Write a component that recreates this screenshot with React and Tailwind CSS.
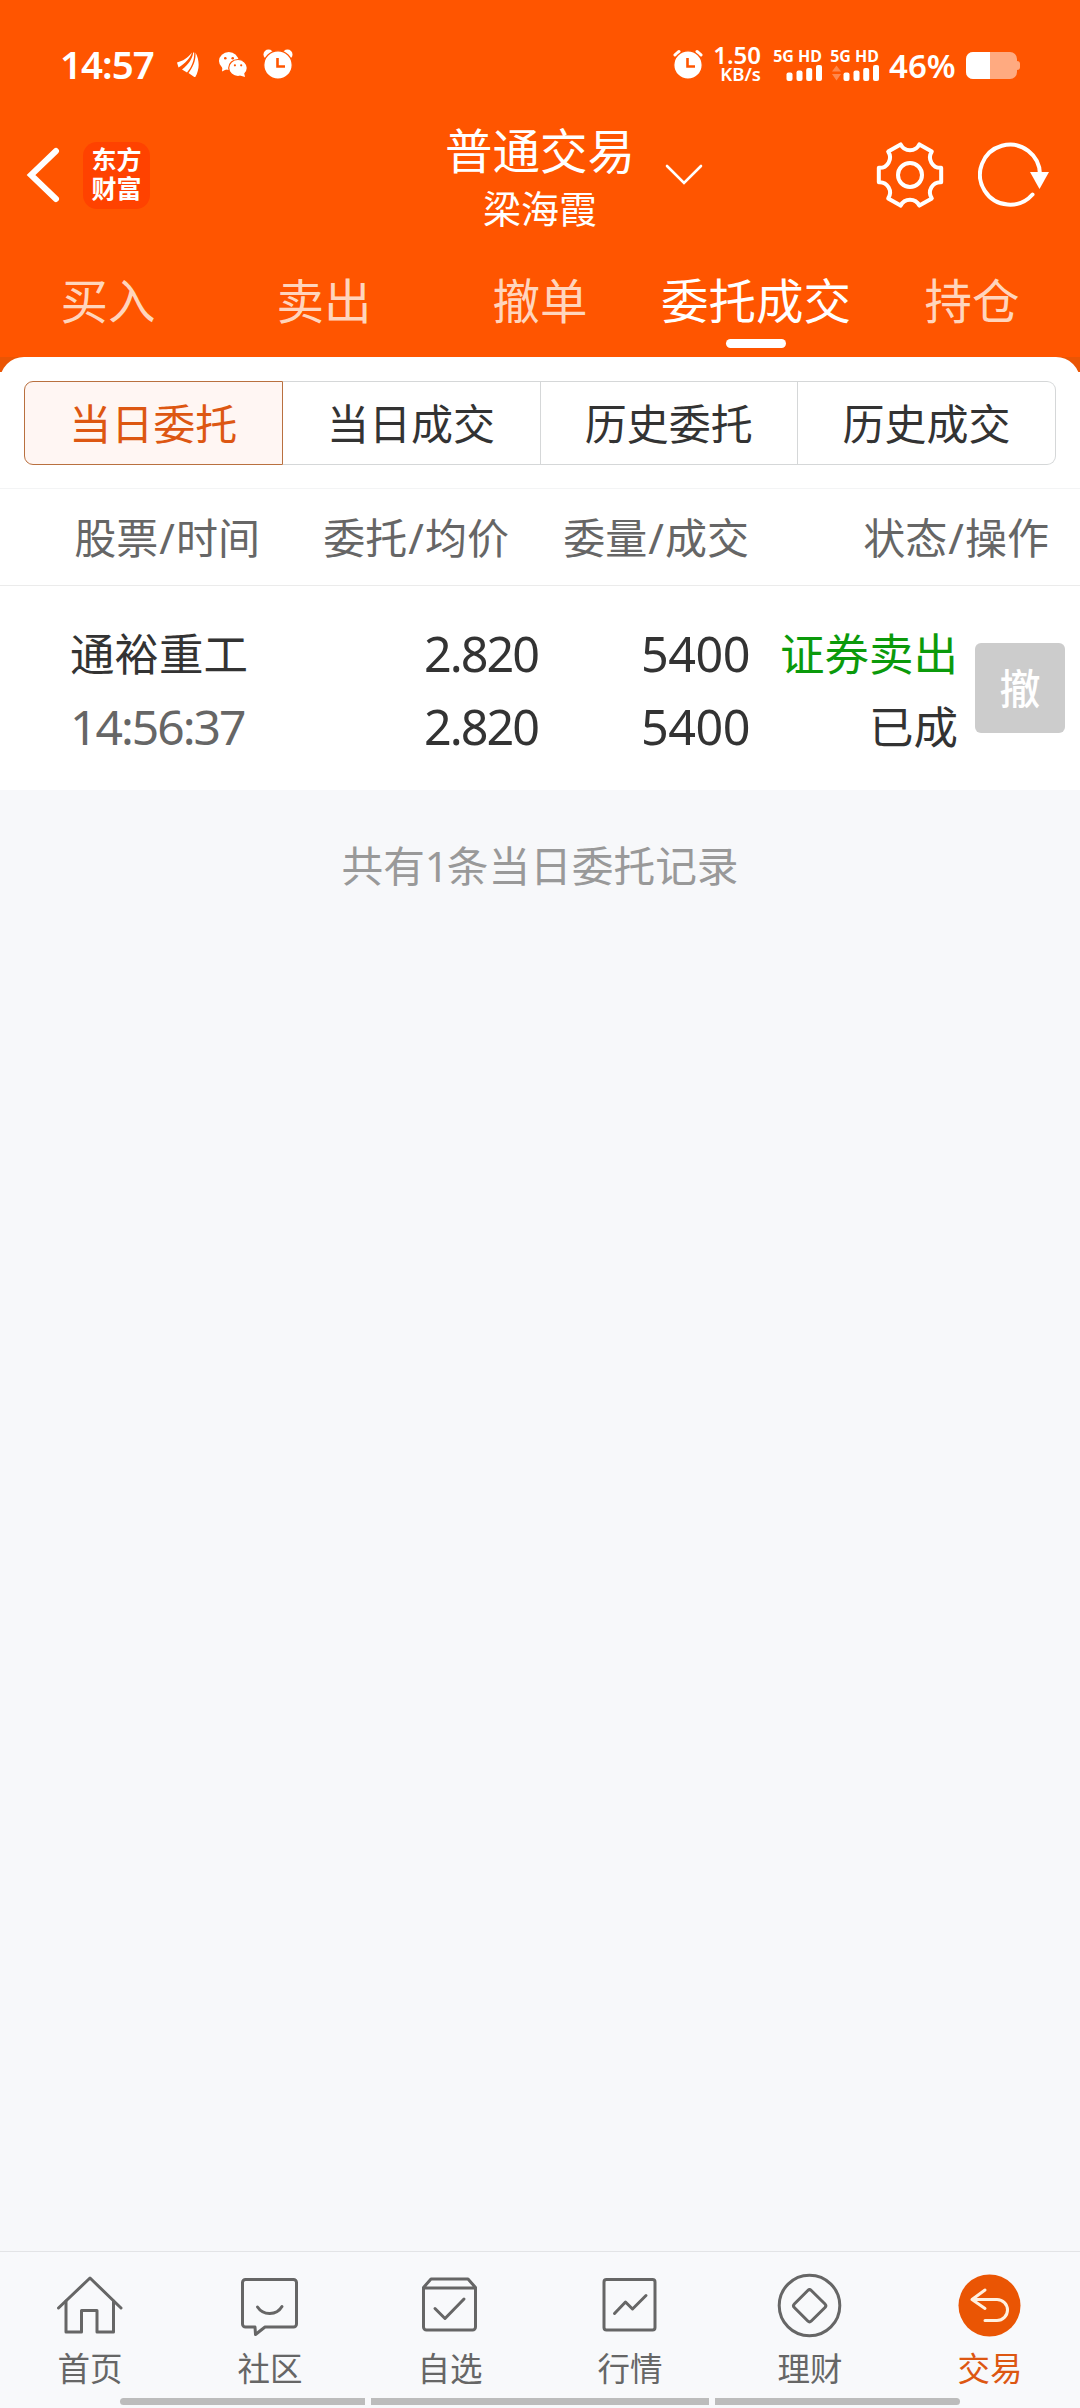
import { useState } from "react";

const TABS = ["买入", "卖出", "撤单", "委托成交", "持仓"];
const FILTERS = ["当日委托", "当日成交", "历史委托", "历史成交"];
const NAV = [
  { label: "首页", Icon: HomeIcon },
  { label: "社区", Icon: ChatIcon },
  { label: "自选", Icon: WatchIcon },
  { label: "行情", Icon: MarketIcon },
  { label: "理财", Icon: WealthIcon },
  { label: "交易", Icon: TradeIcon },
];

const ORDERS = [
  {
    id: 1,
    name: "通裕重工",
    time: "14:56:37",
    price: "2.820",
    avg: "2.820",
    qty: "5400",
    filled: "5400",
    side: "证券卖出",
    status: "已成",
  },
];

// Six-tooth outline: flat teeth joined by concave arcs
function gearPath(c, r) {
  const pt = (deg) => {
    const a = (deg * Math.PI) / 180;
    return `${(c + r * Math.cos(a)).toFixed(2)} ${(c + r * Math.sin(a)).toFixed(2)}`;
  };
  let d = `M${pt(-13)}`;
  for (let i = 0; i < 6; i++) {
    d += `L${pt(i * 60 + 13)}A10.4 10.4 0 0 0 ${pt(i * 60 + 47)}`;
  }
  return d + "Z";
}

function AlarmIcon({ className = "", filledBells = false }) {
  return (
    <svg viewBox="0 0 30 30" className={`h-[30px] w-[30px] ${className}`} fill="none">
      {filledBells ? (
        <g fill="#fff">
          <circle cx="5.500" cy="5.500" r="5" />
          <circle cx="24.500" cy="5.500" r="5" />
        </g>
      ) : (
        <path d="M2 6 6 2.500M28 6 24 2.500" stroke="#fff" strokeWidth="3" strokeLinecap="round" />
      )}
      <circle cx="15" cy="16" r="14.200" fill="#fff" stroke="#ff5500" strokeWidth="1.200" />
      <path d="M14.500 9v8.500h7.500" stroke="#ff5500" strokeWidth="2.600" />
    </svg>
  );
}

function BrandIcon() {
  return (
    <svg viewBox="0 0 22 25" className="h-[25px] w-[22px]" fill="#fff">
      <path d="M0 10.500C6 9 10.500 6 15 0.500 13.500 6 8 11.500 1.500 15.500Z" />
      <path d="M16.200 0.500C15.500 7 11 13 5 17.500L10 20.500C15 14.500 17.500 8 17.200 0.500Z" />
      <path d="M18.500 0.500C19 8.500 16 15 11.500 21L18 25.500C22.500 18 23 9 18.500 0.500Z" />
    </svg>
  );
}

function WechatIcon() {
  return (
    <svg viewBox="0 0 28 25" className="h-[25px] w-[28px]">
      <ellipse cx="9.800" cy="9" rx="9.800" ry="9" fill="#fff" />
      <path d="M3.500 14 3 19.500 9 16.500Z" fill="#fff" />
      <ellipse cx="19" cy="16" rx="9.300" ry="8.500" fill="#fff" stroke="#ff5500" strokeWidth="1.200" />
      <path d="M21 23.500 26 25 25 20.500Z" fill="#fff" />
      <g fill="#ff5500">
        <circle cx="6.300" cy="6.300" r="1.300" />
        <circle cx="13.700" cy="6.300" r="1.300" />
        <circle cx="15.900" cy="13.300" r="1.100" />
        <circle cx="22.200" cy="13.300" r="1.100" />
      </g>
    </svg>
  );
}

function Signal({ data = false }) {
  return (
    <div className="flex w-12 flex-col items-end">
      <span className="whitespace-nowrap text-[16px] leading-[17px] font-bold">5G HD</span>
      <svg viewBox="0 0 48 16" className="h-4 w-12" fill="#fff">
        {data && (
          <g opacity="0.3">
            <path d="M1 6.500 5.500 0.500 10 6.500Z" />
            <path d="M1 9 5.500 15.500 10 9Z" />
          </g>
        )}
        <rect x="12.500" y="7.500" width="6" height="8.500" rx="2" />
        <rect x="22.500" y="5.500" width="6" height="10.500" rx="2" />
        <rect x="32.200" y="3" width="6" height="13" rx="2" />
        <rect x="42" y="0" width="6" height="16" rx="2" />
      </svg>
    </div>
  );
}

function NavSvg({ children }) {
  return (
    <svg
      viewBox="0 0 72 72"
      className="h-[72px] w-[72px]"
      fill="none"
      stroke="#666"
      strokeWidth="3"
      strokeLinecap="round"
      strokeLinejoin="round"
    >
      {children}
    </svg>
  );
}

function HomeIcon() {
  return (
    <NavSvg>
      <path d="M4.500 38 36 8 67 38" />
      <path d="M12 31V62H27.500V40.500H43V62H59.500V31" />
    </NavSvg>
  );
}

function ChatIcon() {
  return (
    <NavSvg>
      <path d="M11.500 9.500H59.500a3 3 0 0 1 3 3V54a3 3 0 0 1-3 3H31L21.500 64.500 21 57H11.500a3 3 0 0 1-3-3V12.500a3 3 0 0 1 3-3Z" />
      <path d="M23.500 37A14.500 14.500 0 0 0 48 36.500" />
    </NavSvg>
  );
}

function WatchIcon() {
  return (
    <NavSvg>
      <path d="M9.500 17.500 17 9H54L61.500 17.500V57a3 3 0 0 1-3 3H12.500a3 3 0 0 1-3-3ZM9.500 18H61.500" />
      <path d="M21 38.500 31 48.500 50 29" />
    </NavSvg>
  );
}

function MarketIcon() {
  return (
    <NavSvg>
      <rect x="10" y="9.500" width="51" height="50.500" rx="2.500" />
      <path d="M20.500 43.500 31.500 32 38.500 39 52 25.500" />
    </NavSvg>
  );
}

function WealthIcon() {
  return (
    <NavSvg>
      <circle cx="35.500" cy="35.500" r="30.300" />
      <path d="M33.800 20.500a2.500 2.500 0 0 1 3.500 0L51 34a2.500 2.500 0 0 1 0 3.500L37.300 51a2.500 2.500 0 0 1-3.500 0L20.300 37.500a2.500 2.500 0 0 1 0-3.500Z" />
    </NavSvg>
  );
}

function TradeIcon() {
  return (
    <NavSvg>
      <circle cx="35.500" cy="35.500" r="31" fill="#ea5504" stroke="none" />
      <path d="M31 20 18 29.500 31 38.500M18 29.500H43A10.500 10.500 0 0 1 43 50.500H31" stroke="#fff0e0" />
    </NavSvg>
  );
}

function StatusBar() {
  return (
    <div className="flex h-[126px] items-start pt-[46px] pl-[60px] text-white">
      <span className="h-9 w-[98px] text-[38.500px] leading-9 font-semibold tracking-[-1px]">14:57</span>
      <div className="ml-[19px] flex h-9 items-center">
        <BrandIcon />
        <span className="w-5" />
        <WechatIcon />
        <AlarmIcon className="ml-4" filledBells />
      </div>
      <div className="ml-auto flex h-9 items-center pr-[60px]">
        <AlarmIcon />
        <div className="ml-3 flex w-[46px] flex-col items-end font-semibold">
          <span className="text-[24px] leading-5">1.50</span>
          <span className="text-[18.500px] leading-[18px]">KB/s</span>
        </div>
        <div className="ml-[13px] flex gap-[9px]">
          <Signal />
          <Signal data />
        </div>
        <span className="ml-[10px] w-[77px] pt-1 text-[33px] leading-9 font-semibold">46%</span>
        <div className="flex items-center pt-[3px]">
          <div className="h-[27px] w-[51px] overflow-hidden rounded-[7px] bg-[#ffaa80]">
            <div className="h-full w-6 bg-white" />
          </div>
          <div className="h-[9px] w-[3px] rounded-r bg-[#ffaa80]" />
        </div>
      </div>
    </div>
  );
}

function TitleBar() {
  return (
    <div className="grid h-[108px] grid-cols-[1fr_auto_1fr] text-white">
      <div className="flex h-[98px] items-center pl-[26px]">
        <svg viewBox="0 0 34 56" className="h-14 w-[34px]" fill="none">
          <path d="M30 4 5 28 30 52" stroke="#fff" strokeWidth="6" strokeLinecap="round" />
        </svg>
        <div className="ml-[23px] flex h-[67px] w-[67px] flex-col items-center justify-center rounded-[14px] bg-[#ff4200] pb-[2px] text-[25px] leading-[29px] font-bold">
          <span>东方</span>
          <span>财富</span>
        </div>
      </div>
      <div className="flex flex-col items-center">
        <span className="text-[47.500px] leading-[50px]">普通交易</span>
        <span className="text-[38px] leading-[65px]">梁海霞</span>
      </div>
      <div className="flex h-[98px] items-center pl-[30px]">
        <svg viewBox="0 0 38 22" className="h-[22px] w-[38px]" fill="none">
          <path d="M2 2 19 19 36 2" stroke="#fff" strokeWidth="2.600" strokeLinecap="round" />
        </svg>
        <svg viewBox="0 0 70 70" className="ml-[172px] h-[70px] w-[70px]" fill="none" stroke="#fff" strokeWidth="4" strokeLinejoin="round">
          <path d={gearPath(35, 32)} />
          <circle cx="35" cy="35" r="12" />
        </svg>
        <svg viewBox="0 0 72 70" className="ml-[33px] h-[70px] w-[72px]" fill="none">
          <path d="M62 35A30 30 0 1 0 54.500 54.500" stroke="#fff" strokeWidth="4" strokeLinecap="round" />
          <path d="M52 32H71L61.500 49Z" fill="#fff" />
        </svg>
      </div>
    </div>
  );
}

export default function App() {
  const [tab, setTab] = useState("委托成交");
  const [filter, setFilter] = useState("当日委托");
  const [nav, setNav] = useState("交易");

  return (
    <div className="flex h-[2408px] w-[1080px] flex-col overflow-hidden bg-[#f7f8fa] font-['Noto_Sans','Noto_Sans_CJK_SC',sans-serif] text-[#333]">
      <header className="shrink-0 bg-[#ff5500]">
        <StatusBar />
        <TitleBar />
        <div className="grid h-[123px] grid-cols-5">
          {TABS.map((t) => (
            <button
              key={t}
              onClick={() => setTab(t)}
              className={`flex flex-col items-center pt-[33px] text-[47.500px] leading-[68px] whitespace-nowrap ${
                t === tab ? "text-white" : "text-[#ffd5bd]"
              }`}
            >
              {t}
              {t === tab && <span className="mt-1 h-[9px] w-[60px] rounded-full bg-white" />}
            </button>
          ))}
        </div>
      </header>

      <div className="shrink-0 bg-[linear-gradient(#ea5504_15px,#fff_15px)]">
        <section className="rounded-t-[24px] bg-white">
          <div className="flex h-[132px] border-b border-[#f3f4f5] px-6 pt-6">
            {FILTERS.map((f) => (
              <button
                key={f}
                onClick={() => setFilter(f)}
                className={`h-[84px] flex-1 border pt-[2px] text-[42px] leading-[80px] first:rounded-l-[9px] last:rounded-r-[9px] ${
                  f === filter
                    ? "border-[#b9703f] bg-[#fff6f3] text-[#dd5712]"
                    : "border-l-0 border-[#d5d7d8]"
                }`}
              >
                {f}
              </button>
            ))}
          </div>

          <div className="grid h-[97px] grid-cols-[260px_249px_240px_1fr] items-center border-b border-[#ebebeb] pr-[31px] text-right text-[42px] text-[#666]">
            <span>股票<span className="px-px">/</span>时间</span>
            <span>委托<span className="px-px">/</span>均价</span>
            <span>委量<span className="px-px">/</span>成交</span>
            <span>状态<span className="px-px">/</span>操作</span>
          </div>

          {ORDERS.map((o) => (
            <div key={o.id} className="flex h-[204px] pt-[31px] text-right text-[44.500px] leading-[73px]">
              <div className="w-[260px] pl-[70px] text-left">
                <div>{o.name}</div>
                <div className="text-[48px] tracking-[-2px] text-[#666]">{o.time}</div>
              </div>
              <div className="w-[278px] text-[48.500px] tracking-[-2px]">
                <div>{o.price}</div>
                <div>{o.avg}</div>
              </div>
              <div className="w-[212px] text-[48.500px] tracking-[-0.500px]">
                <div>{o.qty}</div>
                <div>{o.filled}</div>
              </div>
              <div className="w-[208px]">
                <div className="text-[#0b9a0b]">{o.side}</div>
                <div>{o.status}</div>
              </div>
              <button className="mt-[26px] ml-[17px] h-[90px] w-[90px] rounded-[6px] bg-[#ccc] text-center text-[41px] leading-[90px] font-medium text-white">
                撤
              </button>
            </div>
          ))}
        </section>
      </div>

      <p className="mt-[44px] text-center text-[41.700px] leading-[64px] text-[#999]">
        共有<span className="tracking-[-2px]">{ORDERS.length}</span>条当日委托记录
      </p>

      <nav className="mt-auto h-[157px] shrink-0 border-t border-[#e3e4e6] bg-[#f8f9fb]">
        <div className="grid h-[146px] grid-cols-6">
          {NAV.map(({ label, Icon }) => (
            <button
              key={label}
              onClick={() => setNav(label)}
              className={`flex flex-col items-center pt-[18px] text-[32.500px] leading-[54px] ${
                label === nav ? "text-[#dd5712]" : "text-[#666]"
              }`}
            >
              <Icon />
              {label}
            </button>
          ))}
        </div>
        <div className="mx-[120px] flex h-[7px] gap-[6px]">
          <span className="w-[245px] rounded-l-full bg-[#bcbcbc]" />
          <span className="flex-1 bg-[#bcbcbc]" />
          <span className="w-[245px] rounded-r-full bg-[#bcbcbc]" />
        </div>
      </nav>
    </div>
  );
}
